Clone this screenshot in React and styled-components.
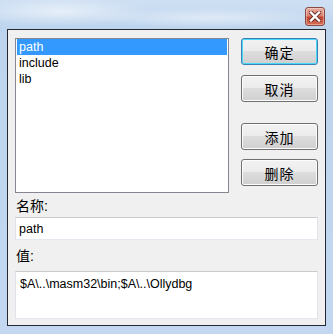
import React, { useState } from "react";
import styled, { createGlobalStyle } from "styled-components";

const Global = createGlobalStyle`
  html, body { margin: 0; padding: 0; background: #c5d9ef; }
  * { box-sizing: border-box; }
`;

const Frame = styled.div`
  width: 333px;
  height: 334px;
  display: flex;
  flex-direction: column;
  padding: 0 7px 8px 7px;
  font-family: "Liberation Sans", "Noto Sans CJK SC", sans-serif;
  background:
    radial-gradient(ellipse 90px 14px at 60px 12px, rgba(255, 255, 255, 0.55), rgba(255, 255, 255, 0)),
    radial-gradient(ellipse 120px 10px at 210px 18px, rgba(255, 255, 255, 0.45), rgba(255, 255, 255, 0)),
    linear-gradient(180deg, #cfe0f3 0px, #bdd4ee 29px, #c3d8f0 100%);
`;

const TitleBar = styled.div`
  height: 29px;
  display: flex;
  justify-content: flex-end;
  align-items: flex-start;
  padding-top: 7px;
`;

const CloseButton = styled.div`
  width: 20px;
  height: 19px;
  margin-right: 1px;
  border: 1px solid #8a4a40;
  border-radius: 3px;
  background: linear-gradient(180deg, #e9ab9f 0%, #d98472 45%, #c4442f 55%, #d67059 100%);
  box-shadow: inset 0 0 0 1px rgba(255, 255, 255, 0.35);
  display: flex;
  align-items: center;
  justify-content: center;
`;

const Client = styled.div`
  flex: 1;
  background: #f0f0f0;
  border: 1px solid #25292f;
  padding: 8px 7px 6px 7px;
  display: flex;
  flex-direction: column;
`;

const Top = styled.div`
  display: flex;
  gap: 12px;
`;

const ListBox = styled.div`
  width: 214px;
  height: 155px;
  background: #fff;
  border: 1px solid #828790;
  padding: 0 1px;
  font-size: 12.5px;
`;

const ListItem = styled.div`
  height: 16px;
  line-height: 16px;
  padding-left: 2px;
  color: ${(p) => (p.$selected ? "#ffffff" : "#000000")};
  background: ${(p) => (p.$selected ? "#3399ff" : "transparent")};
`;

const Buttons = styled.div`
  display: flex;
  flex-direction: column;
`;

const Button = styled.div`
  width: 77px;
  height: 27px;
  margin-top: ${(p) => p.$gap || 0}px;
  border: 1px solid ${(p) => (p.$default ? "#3c7fb1" : "#707070")};
  border-radius: 3px;
  background: linear-gradient(180deg, #f2f2f2 0%, #ebebeb 49%, #dddddd 50%, #cfcfcf 100%);
  box-shadow: inset 0 0 0 1px ${(p) => (p.$default ? "#48d8fb" : "#fcfcfc")};
  display: flex;
  align-items: center;
  justify-content: center;
  font-size: 14px;
  color: #000;
  letter-spacing: 1px;
`;

const Label = styled.div`
  font-size: 14px;
  color: #000;
  height: 18px;
  line-height: 18px;
  padding-left: 1px;
  margin-top: ${(p) => p.$top}px;
`;

const Field = styled.div`
  width: 303px;
  height: ${(p) => p.$h}px;
  margin-top: ${(p) => p.$top}px;
  background: #fff;
  border: 1px solid #e2e3ea;
  border-top-color: #c9cbd1;
  border-bottom-color: #e3e9ef;
  font-size: 12.5px;
  padding: ${(p) => p.$pad};
  color: #000;
`;

const items = ["path", "include", "lib"];

export default function App() {
  const [sel] = useState(0);
  return (
    <>
      <Global />
      <Frame>
        <TitleBar>
          <CloseButton>
            <svg width="12" height="11" viewBox="0 0 12 11">
              <path
                d="M2 1.5 L10 9.5 M10 1.5 L2 9.5"
                stroke="#6a3028"
                strokeWidth="4.2"
                strokeLinecap="square"
              />
              <path
                d="M2 1.5 L10 9.5 M10 1.5 L2 9.5"
                stroke="#ffffff"
                strokeWidth="2.4"
                strokeLinecap="square"
              />
            </svg>
          </CloseButton>
        </TitleBar>
        <Client>
          <Top>
            <ListBox>
              {items.map((t, i) => (
                <ListItem key={t} $selected={i === sel}>
                  {t}
                </ListItem>
              ))}
            </ListBox>
            <Buttons>
              <Button $default>确定</Button>
              <Button $gap={10}>取消</Button>
              <Button $gap={21}>添加</Button>
              <Button $gap={9}>删除</Button>
            </Buttons>
          </Top>
          <Label $top={4}>名称:</Label>
          <Field $h={23} $top={2} $pad="4px 3px">
            path
          </Field>
          <Label $top={7}>值:</Label>
          <Field $h={48} $top={6} $pad="5px 4px">
            $A\..\masm32\bin;$A\..\Ollydbg
          </Field>
        </Client>
      </Frame>
    </>
  );
}
